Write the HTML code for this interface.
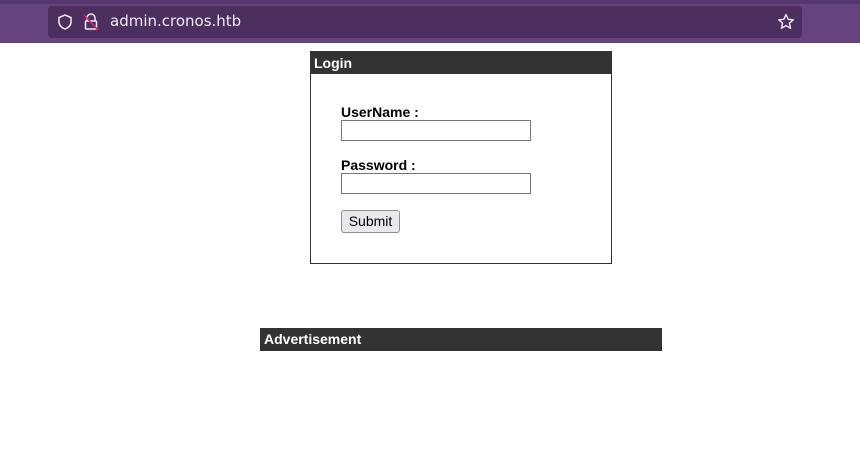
<!DOCTYPE html>
<html><head><style>
body{margin:0;width:860px;height:450px;background:#fff;font-family:"Liberation Sans",sans-serif;position:relative;overflow:hidden}
.bar{position:absolute;left:0;top:0;width:860px;height:43px;background:#65437f}
.bar .top{position:absolute;left:0;top:0;width:860px;height:4px;background:#553770}
.url{position:absolute;left:48px;top:6px;width:754px;height:32px;background:#4d2f5f;border-radius:4px}
.url span{position:absolute;left:62px;top:6px;color:#f0eaf4;font-family:"DejaVu Sans",sans-serif;font-size:15px}
.box{position:absolute;left:310px;top:51px;width:300px;height:211px;border:1px solid #333}
.hd{background:#333;color:#fff;font-weight:bold;font-size:14px;height:22px;line-height:23px;padding-left:3px}
.lbl{position:absolute;left:30px;font-weight:bold;font-size:14px;color:#000}
.inp{position:absolute;left:30px;width:188px;height:19px;border:1px solid #767676}
.btn{position:absolute;left:30px;top:158px;width:57px;height:21px;border:1px solid #8f8f8f;border-radius:3px;background:#e9e9ed;font-size:14px;text-align:center;line-height:21px}
.ad{position:absolute;left:260px;top:328px;width:398px;height:23px;background:#333;color:#fff;font-weight:bold;font-size:14px;line-height:23px;padding-left:4px}
</style></head><body>
<div class="bar"><div class="top"></div>
<div class="url">
<svg style="position:absolute;left:8px;top:7px" width="18" height="18" viewBox="0 0 18 18"><path d="M9 2 L15 4.5 V9 C15 12.5 12 15 9 16 C6 15 3 12.5 3 9 V4.5 Z" fill="none" stroke="#f0eaf4" stroke-width="1.5"/></svg>
<svg style="position:absolute;left:34px;top:6px" width="18" height="20" viewBox="0 0 18 20"><path d="M5 9 V6 A4 4 0 0 1 13 6 V9" fill="none" stroke="#f0eaf4" stroke-width="1.5"/><rect x="3.5" y="9" width="11" height="8" rx="1" fill="none" stroke="#f0eaf4" stroke-width="1.5"/><path d="M2 3 L16 18" stroke="#e0245e" stroke-width="1.5"/></svg>
<span>admin.cronos.htb</span>
<svg style="position:absolute;left:729px;top:7px" width="18" height="18" viewBox="0 0 18 18"><path d="M9 1.5 L11.2 6.3 L16.3 6.8 L12.4 10.2 L13.6 15.3 L9 12.6 L4.4 15.3 L5.6 10.2 L1.7 6.8 L6.8 6.3 Z" fill="none" stroke="#f0eaf4" stroke-width="1.4" stroke-linejoin="round"/></svg>
</div></div>
<div class="box"><div class="hd">Login</div>
<div class="lbl" style="top:52px">UserName :</div>
<div class="inp" style="top:68px"></div>
<div class="lbl" style="top:105px">Password :</div>
<div class="inp" style="top:121px"></div>
<div class="btn">Submit</div>
</div>
<div class="ad">Advertisement</div>
</body></html>
